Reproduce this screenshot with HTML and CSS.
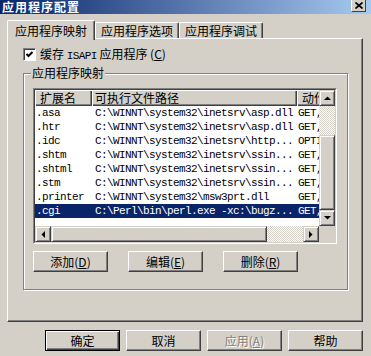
FILE: index.html
```html
<!DOCTYPE html>
<html lang="zh-CN">
<head>
    <meta charset="UTF-8">
    <title>应用程序配置</title>
    <link rel="stylesheet" href="styles.css">
</head>
<body>
    <div class="titlebar">
        <span class="title">应用程序配置</span>
        <span class="close">
            <svg width="8" height="7" viewBox="0 0 8 7"><path d="M0.5 0.5l7 6M7.5 0.5l-7 6" stroke="#000" stroke-width="1.7"/></svg>
        </span>
    </div>

    <div class="dialog">
        <div class="tabs">
            <div class="tab active">应用程序映射</div>
            <div class="tab">应用程序选项</div>
            <div class="tab">应用程序调试</div>
        </div>

        <div class="panel">
            <div class="check-row">
                <span class="checkbox">
                    <svg width="9" height="9" viewBox="0 0 9 9"><polyline points="1.5,4 3.5,6 7.5,2" stroke="#000" stroke-width="2" fill="none"/></svg>
                </span>
                <span class="check-label">缓存 <span class="mono">ISAPI</span> 应用程序 (<u>C</u>)</span>
            </div>

            <div class="group">
                <span class="group-title">应用程序映射</span>

                <div class="list">
                    <div class="list-in">
                        <div class="list-body">
                            <div class="list-head">
                                <div class="hcell">扩展名</div>
                                <div class="hcell hpath">可执行文件路径</div>
                                <div class="hcell">动作</div>
                            </div>
                            <div class="row"><span class="c-ext">.asa</span><span class="c-path">C:\WINNT\system32\inetsrv\asp.dll</span><span class="c-act">GET,</span></div>
                            <div class="row"><span class="c-ext">.htr</span><span class="c-path">C:\WINNT\system32\inetsrv\asp.dll</span><span class="c-act">GET,</span></div>
                            <div class="row"><span class="c-ext">.idc</span><span class="c-path">C:\WINNT\system32\inetsrv\http...</span><span class="c-act">OPTI</span></div>
                            <div class="row"><span class="c-ext">.shtm</span><span class="c-path">C:\WINNT\system32\inetsrv\ssin...</span><span class="c-act">GET,</span></div>
                            <div class="row"><span class="c-ext">.shtml</span><span class="c-path">C:\WINNT\system32\inetsrv\ssin...</span><span class="c-act">GET,</span></div>
                            <div class="row"><span class="c-ext">.stm</span><span class="c-path">C:\WINNT\system32\inetsrv\ssin...</span><span class="c-act">GET,</span></div>
                            <div class="row"><span class="c-ext">.printer</span><span class="c-path">C:\WINNT\system32\msw3prt.dll</span><span class="c-act">GET,</span></div>
                            <div class="row selected"><span class="c-ext">.cgi</span><span class="c-path">C:\Perl\bin\perl.exe -xc:\bugz...</span><span class="c-act">GET,</span></div>
                        </div>

                        <div class="vscroll">
                            <div class="sbtn"><svg width="7" height="4" viewBox="0 0 7 4"><path d="M0 4h7L3.5 0.5z"/></svg></div>
                            <div class="track vtrack-top"></div>
                            <div class="sbtn vthumb"></div>
                            <div class="track fill"></div>
                            <div class="sbtn"><svg width="7" height="4" viewBox="0 0 7 4"><path d="M0 0h7L3.5 3.5z"/></svg></div>
                        </div>

                        <div class="hscroll">
                            <div class="sbtn"><svg width="4" height="7" viewBox="0 0 4 7"><path d="M4 0v7L0.5 3.5z"/></svg></div>
                            <div class="sbtn hthumb"></div>
                            <div class="track fill"></div>
                            <div class="sbtn"><svg width="4" height="7" viewBox="0 0 4 7"><path d="M0 0v7L3.5 3.5z"/></svg></div>
                        </div>

                        <div class="corner"></div>
                    </div>
                </div>

                <div class="group-buttons">
                    <button type="button" class="btn">添加(<u>D</u>)</button>
                    <button type="button" class="btn">编辑(<u>E</u>)</button>
                    <button type="button" class="btn">删除(<u>R</u>)</button>
                </div>
            </div>
        </div>

        <div class="footer">
            <button type="button" class="btn default">确定</button>
            <button type="button" class="btn">取消</button>
            <button type="button" class="btn disabled">应用(<u>A</u>)</button>
            <button type="button" class="btn">帮助</button>
        </div>
    </div>
</body>
</html>
```

FILE: styles.css
```css
* {
    box-sizing: border-box;
}

body {
    margin: 0;
    width: 371px;
    height: 356px;
    overflow: hidden;
    background-color: #d4d0c8;
    font-family: "Noto Sans CJK SC", sans-serif;
    font-size: 12px;
    color: #000;
}

.mono {
    font-family: "Liberation Mono", monospace;
    font-size: 11px;
    letter-spacing: -0.6px;
}

/* barra de titulo */
.titlebar {
    height: 14px;
    display: flex;
    justify-content: space-between;
    align-items: flex-start;
    padding: 0 5px 0 2px;
    background: linear-gradient(to right, #0a246a, #a6caf0);
}

.title {
    color: #fff;
    font-weight: bold;
    font-size: 12px;
    line-height: 14px;
    letter-spacing: 1px;
}

.close {
    width: 15px;
    height: 12px;
    display: flex;
    align-items: center;
    justify-content: center;
    background-color: #d4d0c8;
    border: 1px solid;
    border-color: #fff #404040 #404040 #fff;
    border-top: none;
}

.dialog {
    padding: 6px 8px 0 7px;
}

/* pestanas */
.tabs {
    display: flex;
    align-items: flex-end;
    height: 18px;
    position: relative;
    z-index: 1;
}

.tab {
    height: 16px;
    padding: 0 5px;
    line-height: 15px;
    border: 1px solid;
    border-color: #fff #404040 transparent #fff;
    border-bottom: none;
    border-radius: 2px 2px 0 0;
    box-shadow: inset -1px 0 #808080;
    background-color: #d4d0c8;
}

.tab.active {
    height: 20px;
    margin-bottom: -2px;
    padding: 2px 7px 0;
    line-height: 16px;
}

.panel {
    height: 284px;
    padding: 9px 14px 0 15px;
    border: 1px solid;
    border-color: #fff #404040 #404040 #fff;
    box-shadow: inset -1px -1px #808080;
}

.check-row {
    display: flex;
    align-items: center;
    height: 13px;
}

.checkbox {
    width: 13px;
    height: 13px;
    display: flex;
    align-items: center;
    justify-content: center;
    background-color: #fff;
    border: 1px solid;
    border-color: #808080 #fff #fff #808080;
    box-shadow: inset 1px 1px #404040;
}

.check-label {
    margin-left: 4px;
    line-height: 14px;
    white-space: nowrap;
}

/* cuadro de grupo */
.group {
    position: relative;
    margin-top: 12px;
    height: 217px;
    padding: 14px 9px 0 9px;
    border: 1px solid #808080;
    box-shadow: 1px 1px 0 #fff, inset 1px 1px 0 #fff;
}

.group-title {
    position: absolute;
    top: -8px;
    left: 7px;
    padding: 0 1px;
    line-height: 14px;
    background-color: #d4d0c8;
}

.list {
    width: 304px;
    height: 156px;
    border: 1px solid;
    border-color: #808080 #fff #fff #808080;
}

.list-in {
    height: 100%;
    display: grid;
    grid-template-columns: 1fr 16px;
    grid-template-rows: 1fr 16px;
    border: 1px solid;
    border-color: #404040 #d4d0c8 #d4d0c8 #404040;
}

.list-body {
    background-color: #fff;
    overflow: hidden;
}

.list-head,
.row {
    display: grid;
    grid-template-columns: 57px 205px 60px;
    white-space: nowrap;
}

.list-head {
    height: 16px;
}

.hcell {
    padding-left: 5px;
    line-height: 16px;
    background-color: #d4d0c8;
    box-shadow: inset 1px 1px #fff, inset -1px -1px #404040, inset -2px -2px #808080;
}

.hcell.hpath {
    padding-left: 3px;
}

.row {
    height: 14px;
    line-height: 14px;
    font-family: "Liberation Mono", monospace;
    font-size: 11px;
    letter-spacing: -0.6px;
}

.row.selected {
    background-color: #0a246a;
    color: #fff;
}

.c-ext {
    padding-left: 1px;
}

.c-path {
    padding-left: 3px;
}

.c-act {
    padding-left: 1px;
}

/* barras de desplazamiento */
.vscroll {
    display: flex;
    flex-direction: column;
}

.hscroll {
    display: flex;
}

.sbtn {
    flex: 0 0 16px;
    display: flex;
    align-items: center;
    justify-content: center;
    background-color: #d4d0c8;
    border: 1px solid;
    border-color: #d4d0c8 #404040 #404040 #d4d0c8;
    box-shadow: inset 1px 1px #fff, inset -1px -1px #808080;
}

.track {
    background: repeating-conic-gradient(#d4d0c8 0 25%, #fff 0 50%) 0 0 / 2px 2px;
}

.track.fill {
    flex: 1;
}

.vtrack-top {
    flex: 0 0 29px;
}

.vthumb {
    flex-basis: 75px;
}

.hthumb {
    flex-basis: 216px;
}

.corner {
    background-color: #d4d0c8;
}

/* botones */
.group-buttons {
    display: flex;
    gap: 20px;
    margin-top: 7px;
}

.btn {
    width: 75px;
    height: 21px;
    padding: 0;
    font-family: "Noto Sans CJK SC", sans-serif;
    font-size: 12px;
    line-height: 17px;
    color: #000;
    background-color: #d4d0c8;
    border: 1px solid;
    border-color: #fff #404040 #404040 #fff;
    box-shadow: inset -1px -1px #808080;
}

.btn.default {
    border-color: #000;
    box-shadow: inset 1px 1px #fff, inset -1px -1px #404040, inset -2px -2px #808080;
}

.btn.disabled {
    color: #808080;
    text-shadow: 1px 1px #fff;
}

.footer {
    display: flex;
    justify-content: flex-end;
    gap: 6px;
    padding-top: 8px;
}
```
